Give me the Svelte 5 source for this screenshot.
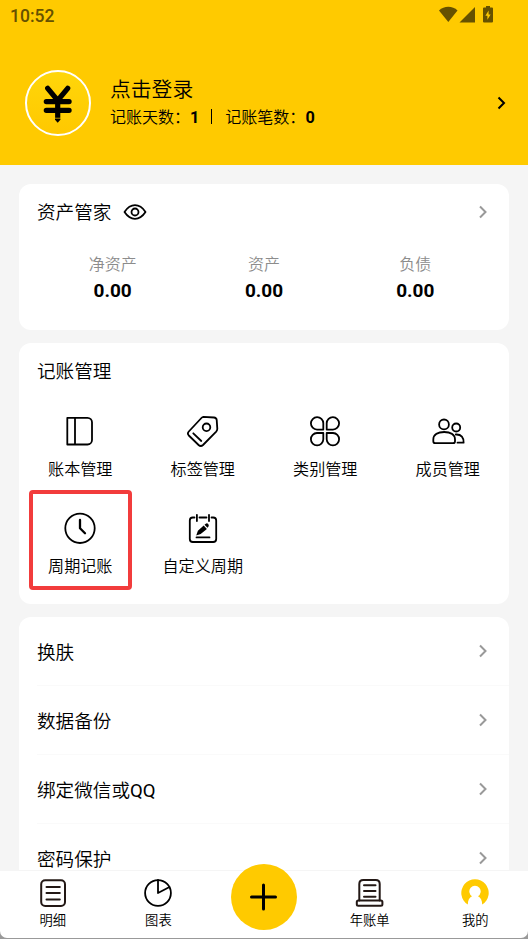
<script>
    let assets = [
        { label: '净资产', value: '0.00' },
        { label: '资产', value: '0.00' },
        { label: '负债', value: '0.00' }
    ];

    let tools = [
        { icon: 'book', label: '账本管理' },
        { icon: 'tag', label: '标签管理' },
        { icon: 'category', label: '类别管理' },
        { icon: 'members', label: '成员管理' },
        { icon: 'clock', label: '周期记账', marked: true },
        { icon: 'calendar', label: '自定义周期' }
    ];

    let settings = [
        { name: '换肤' },
        { name: '数据备份' },
        { name: '绑定微信或', latin: 'QQ' },
        { name: '密码保护' }
    ];

    let tabs = [
        { icon: 'list', label: '明细' },
        { icon: 'chart', label: '图表' },
        { icon: 'add', label: '' },
        { icon: 'bill', label: '年账单' },
        { icon: 'me', label: '我的' }
    ];
</script>

<div class="phone">
    <header>
        <div class="status-bar">
            <span class="time">10:52</span>
            <svg class="status-icons" width="56" height="18" viewBox="0 0 56 18">
                <path d="M0 4.500C5-.4 13.600-.4 18.500 4.500L9.300 16z" />
                <path d="M36 1v15.500H20.500z" />
                <path fill-rule="evenodd" d="M47 0h4v1.500h2a1 1 0 0 1 1 1v13a1 1 0 0 1-1 1h-8a1 1 0 0 1-1-1v-13a1 1 0 0 1 1-1h2zM49.600 4.500l-3.200 5.200h2v4l3.200-5.200h-2z" />
            </svg>
        </div>

        <div class="profile">
            <div class="avatar">
                <svg width="30" height="40" viewBox="0 0 30 40">
                    <g fill="none" stroke="#000" stroke-width="5.200" stroke-linecap="round">
                        <path d="M4.700 5.300L14.700 17.500 24.700 5.300M3.300 18.600h22.800M3.300 27.300h22.800" />
                        <path d="M14.700 17v17.800" stroke-linecap="butt" />
                    </g>
                    <path d="M12 35.600h5.400v1.200L14.700 39.800l-2.700-3z" />
                </svg>
            </div>
            <div class="profile-text">
                <div class="login">点击登录</div>
                <div class="counts">
                    <span>记账天数：</span><b>1</b>
                    <i class="bar"></i>
                    <span>记账笔数：</span><b>0</b>
                </div>
            </div>
            <svg class="arrow dark" width="9" height="14" viewBox="0 0 9 14"><path d="M1.500 1.500L7 7 1.500 12.500" /></svg>
        </div>
    </header>

    <main>
        <section class="card asset-card">
            <div class="card-head">
                <h2>资产管家</h2>
                <svg class="line eye" width="24" height="18" viewBox="0 0 24 18">
                    <path d="M1.500 9C4.500 4.500 8 2.200 12 2.200S19.500 4.500 22.500 9C19.500 13.500 16 15.800 12 15.800S4.500 13.500 1.500 9z" />
                    <circle cx="12" cy="9" r="3.500" />
                </svg>
                <svg class="arrow" width="9" height="14" viewBox="0 0 9 14"><path d="M2 1.500L7.500 7 2 12.500" /></svg>
            </div>
            <div class="assets">
                {#each assets as item}
                    <div class="asset">
                        <span>{item.label}</span>
                        <b>{item.value}</b>
                    </div>
                {/each}
            </div>
        </section>

        <section class="card tool-card">
            <div class="card-head">
                <h2>记账管理</h2>
            </div>
            <div class="tools">
                {#each tools as tool}
                    <div class="tool" class:marked={tool.marked}>
                        <svg class="line" width="34" height="34" viewBox="0 0 34 34">
                            {#if tool.icon === 'book'}
                                <path d="M4.300 3.800h20.200a4.500 4.500 0 0 1 4.500 4.500v17.700a4.500 4.500 0 0 1-4.500 4.500H4.300zM12 3.800v26.700" />
                            {:else if tool.icon === 'tag'}
                                <path d="M17.500 2.900L28 3.500Q30.300 3.700 30.700 5.900L31.300 14.600Q31.400 16.300 30.200 17.600L17 31Q14.800 33 12.600 31L2.800 21.500Q1 19.500 2.800 17.500L15.400 4Q16.300 3 17.500 2.900z" />
                                <circle cx="20.500" cy="13.300" r="3.800" />
                                <path d="M7.300 19.300L15.300 27" />
                            {:else if tool.icon === 'category'}
                                <path d="M15.300 15.600H9A6.200 6.200 0 1 1 15.300 9.300zM18.700 15.600H25A6.200 6.200 0 1 0 18.700 9.300zM15.300 19H9A6.200 6.200 0 1 0 15.300 25.300zM18.700 19H25A6.200 6.200 0 1 1 18.700 25.300z" />
                            {:else if tool.icon === 'members'}
                                <circle cx="13" cy="10.400" r="4.900" />
                                <circle cx="25.200" cy="13.500" r="4" />
                                <path d="M4.300 29.200H22q2 0 2-2v-1.700C24 20.500 19.300 18 13.200 18S2.300 20.500 2.300 25.500v1.700q0 2 2 2z" />
                                <path d="M24.800 20.500C30.500 20.200 32.800 23.500 32.600 28.700H26.500" />
                            {:else if tool.icon === 'clock'}
                                <circle cx="17" cy="17.300" r="14.700" />
                                <path class="hands" d="M17 9v8.300l5 5" />
                            {:else}
                                <path d="M8.500 6.500H6.800Q3.800 6.500 3.800 9.500v18.500q0 3 3 3h20.400q3 0 3-3V9.500q0-3-3-3h-1.700M13.500 6.500h7" />
                                <path d="M10.900 3.800v6.200M23 3.800v6.200M10.500 26.400h13" />
                                <path class="solid" d="M10.200 24.500l1.700-4.700 5.800-5.200 3.200 3.300-6.200 5.200zM18.500 13.800l1.300-1.100q1.300-.8 2.400.3t.3 2.400l-1 1.400z" />
                            {/if}
                        </svg>
                        <span>{tool.label}</span>
                    </div>
                {/each}
            </div>
        </section>

        <section class="card settings">
            {#each settings as item}
                <div class="row">
                    <span>{item.name}{#if item.latin}<em>{item.latin}</em>{/if}</span>
                    <svg class="arrow" width="9" height="14" viewBox="0 0 9 14"><path d="M2 1.500L7.500 7 2 12.500" /></svg>
                </div>
            {/each}
        </section>
    </main>

    <div class="nav-wrap">
        <nav>
            {#each tabs as tab}
                {#if tab.icon === 'add'}
                    <div class="tab">
                        <div class="add">
                            <svg width="28" height="28" viewBox="0 0 28 28"><path d="M13.500 2v24M1.500 14h24" /></svg>
                        </div>
                    </div>
                {:else}
                    <div class="tab">
                        <svg class="line tab-icon {tab.icon}" width="30" height="30" viewBox="0 0 30 30">
                            {#if tab.icon === 'list'}
                                <rect x="3.200" y="2.200" width="23.800" height="25.800" rx="4" />
                                <path d="M8.500 9h13.300M8.500 15h13.300M8.500 21.500h13.300" />
                            {:else if tab.icon === 'chart'}
                                <circle cx="15" cy="15" r="12.900" />
                                <path d="M15 2v13l11.500-6" />
                            {:else if tab.icon === 'bill'}
                                <path d="M4.300 22.500V6q0-4 4-4h12.400q4 0 4 4v16.500" />
                                <rect x="1.800" y="22.500" width="25.600" height="5.300" rx="1.500" />
                                <path d="M9 7.300h11.500M9 13h11.500M9 18.700h11.500" />
                            {:else}
                                <path class="ring" d="M7.800 26.600A13.700 13.700 0 1 1 22.200 26.600C22.200 22.300 20.700 19.500 18 18.200A5.700 5.700 0 1 0 12 18.200C9.300 19.500 7.800 22.300 7.800 26.600z" />
                            {/if}
                        </svg>
                        <span>{tab.label}</span>
                    </div>
                {/if}
            {/each}
        </nav>
    </div>
</div>

<style>
    :global(body) {
        margin: 0;
        overflow: hidden;
    }

    .phone {
        display: flex;
        flex-direction: column;
        width: 528px;
        height: 939px;
        overflow: hidden;
        background: #f5f5f5;
        color: #000;
        font-family: Roboto, "Noto Sans CJK SC", sans-serif;
        font-weight: 350;
    }

    header {
        height: 165px;
        flex-shrink: 0;
        background: #ffca00;
    }

    .status-bar {
        display: flex;
        justify-content: space-between;
        height: 32px;
        padding: 0 33px 0 10px;
        color: #665100;
    }

    .time {
        font-size: 17.5px;
        font-weight: 500;
        line-height: 32px;
    }

    .status-icons {
        margin-top: 6px;
        fill: #665100;
    }

    .profile {
        display: flex;
        align-items: center;
        padding: 38px 22px 0 25px;
    }

    .avatar {
        display: flex;
        align-items: center;
        justify-content: center;
        box-sizing: border-box;
        width: 66px;
        height: 66px;
        border: 2px solid #fff;
        border-radius: 50%;
        background: linear-gradient(#ffd60a, #ffc800);
    }

    .profile-text {
        flex: 1;
        margin-left: 19px;
        padding-top: 1px;
    }

    .login {
        font-size: 20.8px;
        line-height: 28px;
    }

    .counts {
        display: flex;
        align-items: center;
        font-size: 16px;
        line-height: 27px;
    }

    .counts b {
        font-size: 16.3px;
    }

    .bar {
        width: 1px;
        height: 15px;
        margin: 0 13px 2px 12px;
        background: #000;
    }

    .arrow {
        fill: none;
        stroke: #999;
        stroke-width: 2;
    }

    .arrow.dark {
        stroke: #000;
    }

    main {
        flex: 1;
        min-height: 0;
        padding: 19px 19px 0;
        overflow: hidden;
    }

    .card {
        box-sizing: border-box;
        margin-bottom: 13px;
        border-radius: 12px;
        background: #fff;
    }

    .asset-card {
        height: 146px;
    }

    .tool-card {
        height: 261px;
    }

    .card-head {
        display: flex;
        align-items: center;
        height: 56px;
        padding: 0 22px 0 18px;
    }

    .card-head .arrow {
        margin-left: auto;
    }

    h2 {
        margin: 0;
        padding-bottom: 3px;
        font-size: 18.6px;
        font-weight: 350;
    }

    .line {
        fill: none;
        stroke: #000;
        stroke-width: 1.8;
        stroke-linecap: round;
        stroke-linejoin: round;
    }

    .eye {
        margin-left: 12px;
    }

    .assets {
        display: flex;
        padding: 12px 18px 0;
    }

    .asset {
        display: flex;
        flex: 1;
        flex-direction: column;
        align-items: center;
    }

    .asset span {
        color: #8c8c8c;
        font-size: 16px;
        line-height: 26px;
    }

    .asset b {
        font-size: 19px;
        line-height: 26px;
    }

    .tools {
        display: grid;
        grid-template-columns: repeat(4, 1fr);
        grid-auto-rows: 97px;
    }

    .tool {
        position: relative;
        display: flex;
        flex-direction: column;
        align-items: center;
        padding-top: 15px;
        font-size: 16.1px;
        line-height: 24px;
    }

    .tool span {
        margin-top: 10px;
    }

    /* red frame around the highlighted entry */
    .marked::after {
        content: '';
        position: absolute;
        top: -6px;
        left: 10px;
        box-sizing: border-box;
        width: 103px;
        height: 100px;
        border: 4px solid #f23c3c;
        border-radius: 4px;
    }

    .hands {
        stroke-width: 2.3;
    }

    .solid {
        fill: #000;
        stroke: none;
    }

    .row {
        display: flex;
        align-items: center;
        justify-content: space-between;
        box-sizing: border-box;
        height: 69px;
        margin-left: 18px;
        padding-right: 22px;
        border-bottom: 1px solid #fafafa;
        font-size: 18.6px;
    }

    .row span {
        padding-bottom: 2px;
    }

    .row em {
        font-style: normal;
        font-weight: 400;
    }

    .nav-wrap {
        height: 69px;
        flex-shrink: 0;
        background: #999;
    }

    nav {
        display: flex;
        box-sizing: border-box;
        height: 68px;
        border-top: 1px solid #f5f5f5;
        border-radius: 0 0 7px 7px;
        background: #fff;
    }

    .tab {
        position: relative;
        display: flex;
        flex: 1;
        flex-direction: column;
        align-items: center;
        padding-top: 7px;
        font-size: 13.3px;
        line-height: 20px;
    }

    .tab span {
        margin-top: 3px;
    }

    .list,
    .bill {
        stroke: #231815;
        stroke-width: 2;
    }

    .ring {
        fill: #ffca00;
        stroke: none;
    }

    .add {
        position: absolute;
        top: -7px;
        display: flex;
        align-items: center;
        justify-content: center;
        width: 66px;
        height: 66px;
        border-radius: 50%;
        background: #ffca00;
    }

    .add path {
        fill: none;
        stroke: #000;
        stroke-width: 3;
        stroke-linecap: round;
    }
</style>
